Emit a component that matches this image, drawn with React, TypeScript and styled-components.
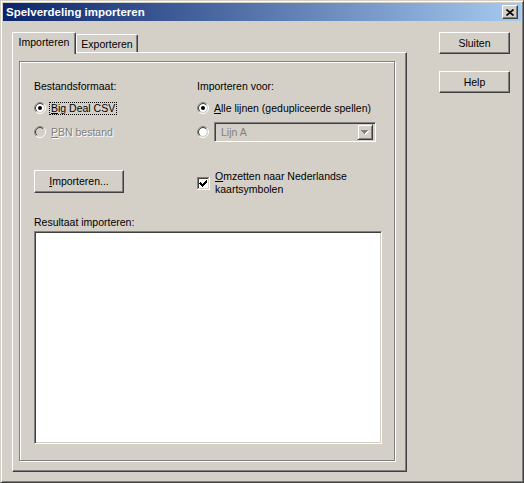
import styled, { createGlobalStyle } from 'styled-components'

const GlobalStyle = createGlobalStyle`
  html, body {
    margin: 0;
    padding: 0;
    background: #d4d0c8;
  }
  body {
    font-family: "Liberation Sans", Arial, sans-serif;
    font-size: 10.5px;
    color: #000;
  }
`

const Window = styled.div`
  width: 524px;
  height: 483px;
  box-sizing: border-box;
  background: #d4d0c8;
  border: 1px solid;
  border-color: #d4d0c8 #404040 #404040 #d4d0c8;
  box-shadow: inset 1px 1px #fff, inset -1px -1px #808080;
  padding: 2px;
  display: flex;
  flex-direction: column;
`

const TitleBar = styled.div`
  height: 18px;
  flex-shrink: 0;
  display: flex;
  align-items: center;
  justify-content: space-between;
  padding: 0 3px 0 3px;
  background: linear-gradient(to right, #0a246a, #a6caf0);
`

const TitleText = styled.span`
  color: #fff;
  font-weight: bold;
  font-size: 11.5px;
`

const CloseButton = styled.div`
  width: 16px;
  height: 14px;
  box-sizing: border-box;
  background: #d4d0c8;
  border: 1px solid;
  border-color: #fff #404040 #404040 #fff;
  box-shadow: inset -1px -1px #808080;
  display: flex;
  align-items: center;
  justify-content: center;
  padding-right: 1px;
`

const Body = styled.div`
  flex: 1;
  display: flex;
  padding: 11px 0 0 9px;
`

const TabArea = styled.div`
  width: 395px;
  display: flex;
  flex-direction: column;
`

const TabStrip = styled.div`
  height: 20px;
  display: flex;
  align-items: flex-end;
`

const Tab = styled.div<{ $active?: boolean }>`
  position: relative;
  z-index: ${p => (p.$active ? 1 : 0)};
  width: ${p => (p.$active ? 64 : 62)}px;
  height: ${p => (p.$active ? 22 : 18)}px;
  margin-bottom: ${p => (p.$active ? -2 : 0)}px;
  box-sizing: border-box;
  background: #d4d0c8;
  border-top: 1px solid #fff;
  border-left: 1px solid #fff;
  border-right: 1px solid #404040;
  border-radius: 2px 2px 0 0;
  box-shadow: inset -1px 0 #808080;
  padding-top: 3px;
  line-height: 13px;
  text-align: center;
`

const Panel = styled.div`
  width: 395px;
  height: 420px;
  box-sizing: border-box;
  border: 1px solid;
  border-color: #fff #404040 #404040 #fff;
  box-shadow: inset -1px -1px #808080;
  padding: 8px 11px 10px 6px;
  display: flex;
`

const Frame = styled.div`
  flex: 1;
  box-sizing: border-box;
  border: 1px solid #808080;
  box-shadow: 1px 1px #fff, inset 1px 1px #fff;
  padding: 18px 12px 0 14px;
  display: flex;
  flex-direction: column;
`

const Row = styled.div<{ $mt: number; $h: number }>`
  display: grid;
  grid-template-columns: 163px 1fr;
  align-items: center;
  height: ${p => p.$h}px;
  margin-top: ${p => p.$mt}px;
`

const Label = styled.div`
  line-height: 13px;
  white-space: nowrap;
`

const Option = styled.div<{ $disabled?: boolean }>`
  display: flex;
  align-items: center;
  gap: 3px;
  color: ${p => (p.$disabled ? '#808080' : '#000')};
  text-shadow: ${p => (p.$disabled ? '1px 1px #fff' : 'none')};
  white-space: nowrap;
`

const Caption = styled.span<{ $focus?: boolean }>`
  line-height: 11px;
  padding: 0 1px;
  border: 1px dotted ${p => (p.$focus ? '#000' : 'transparent')};
`

const Key = styled.span`
  text-decoration: underline;
`

const Combo = styled.div`
  width: 162px;
  height: 20px;
  margin-left: 2px;
  box-sizing: border-box;
  border: 1px solid;
  border-color: #808080 #fff #fff #808080;
  box-shadow: inset 1px 1px #404040, inset -1px -1px #d4d0c8;
  padding: 2px;
  display: flex;
  align-items: center;
  justify-content: space-between;
  background: #d4d0c8;
`

const ComboText = styled.span`
  color: #808080;
  padding-left: 4px;
  line-height: 13px;
`

const DropButton = styled.div`
  width: 16px;
  height: 16px;
  box-sizing: border-box;
  border: 1px solid;
  border-color: #d4d0c8 #404040 #404040 #d4d0c8;
  box-shadow: inset 1px 1px #fff, inset -1px -1px #808080;
  display: flex;
  align-items: center;
  justify-content: center;
`

const PushButton = styled.div<{ $w: number; $h: number }>`
  width: ${p => p.$w}px;
  height: ${p => p.$h}px;
  box-sizing: border-box;
  background: #d4d0c8;
  border: 1px solid;
  border-color: #fff #404040 #404040 #fff;
  box-shadow: inset -1px -1px #808080;
  display: flex;
  align-items: center;
  justify-content: center;
  line-height: 13px;
`

const CheckOption = styled.div`
  display: flex;
  align-items: center;
  gap: 3px;
`

const CheckText = styled.div`
  line-height: 13px;
  padding-left: 2px;
`

const ResultLabel = styled.div`
  margin-top: 20px;
  line-height: 13px;
`

const ResultBox = styled.div`
  margin-top: 2px;
  width: 348px;
  height: 213px;
  box-sizing: border-box;
  background: #fff;
  border: 1px solid;
  border-color: #808080 #fff #fff #808080;
  box-shadow: inset 1px 1px #404040, inset -1px -1px #d4d0c8;
`

const ButtonColumn = styled.div`
  margin-left: 32px;
  display: flex;
  flex-direction: column;
  gap: 17px;
`

function Radio({ checked, disabled }: { checked?: boolean; disabled?: boolean }) {
  return (
    <svg width="12" height="12" viewBox="0 0 12 12">
      <circle cx="6" cy="6" r="4" fill={disabled ? '#d4d0c8' : '#fff'} />
      <circle cx="6" cy="6" r="5.5" fill="none" stroke="#fff" />
      <path d="M2.1 9.9A5.5 5.5 0 0 1 9.9 2.1" fill="none" stroke="#808080" />
      <circle cx="6" cy="6" r="4.5" fill="none" stroke="#d4d0c8" />
      <path d="M2.8 9.2A4.5 4.5 0 0 1 9.2 2.8" fill="none" stroke="#404040" />
      {checked && <circle cx="6" cy="6" r="2" fill="#000" />}
    </svg>
  )
}

function Checkbox() {
  return (
    <svg width="13" height="13" viewBox="0 0 13 13" shapeRendering="crispEdges">
      <rect x="0" y="0" width="13" height="13" fill="#fff" />
      <rect x="0" y="0" width="12" height="1" fill="#808080" />
      <rect x="0" y="0" width="1" height="12" fill="#808080" />
      <rect x="1" y="1" width="10" height="1" fill="#404040" />
      <rect x="1" y="1" width="1" height="10" fill="#404040" />
      <rect x="1" y="11" width="11" height="1" fill="#d4d0c8" />
      <rect x="11" y="1" width="1" height="11" fill="#d4d0c8" />
      <path d="M3 5h1v1h1v1h1v-1h1v-1h1v-1h1v-1h1v3h-1v1h-1v1h-1v1h-1v1h-1v-1h-1v-1h-1v-1h-1z" fill="#000" />
    </svg>
  )
}

export default function App() {
  return (
    <>
      <GlobalStyle />
      <Window>
        <TitleBar>
          <TitleText>Spelverdeling importeren</TitleText>
          <CloseButton>
            <svg width="8" height="7" viewBox="0 0 8 7">
              <path d="M0.5 0.5L7.5 6.5M7.5 0.5L0.5 6.5" stroke="#000" strokeWidth="1.7" />
            </svg>
          </CloseButton>
        </TitleBar>
        <Body>
          <TabArea>
            <TabStrip>
              <Tab $active>Importeren</Tab>
              <Tab>Exporteren</Tab>
            </TabStrip>
            <Panel>
              <Frame>
                <Row $mt={0} $h={13}>
                  <Label>Bestandsformaat:</Label>
                  <Label>Importeren voor:</Label>
                </Row>
                <Row $mt={7} $h={16}>
                  <Option>
                    <Radio checked />
                    <Caption $focus>
                      <Key>B</Key>ig Deal CSV
                    </Caption>
                  </Option>
                  <Option>
                    <Radio checked />
                    <Caption>
                      <Key>A</Key>lle lijnen (gedupliceerde spellen)
                    </Caption>
                  </Option>
                </Row>
                <Row $mt={6} $h={20}>
                  <Option $disabled>
                    <Radio disabled />
                    <Caption>
                      <Key>P</Key>BN bestand
                    </Caption>
                  </Option>
                  <Option>
                    <Radio />
                    <Combo>
                      <ComboText>Lijn A</ComboText>
                      <DropButton>
                        <svg width="8" height="5" viewBox="0 0 8 5" shapeRendering="crispEdges">
                          <path d="M1 1h7l-3.5 4z" fill="#fff" />
                          <path d="M0 0h7l-3.5 4z" fill="#808080" />
                        </svg>
                      </DropButton>
                    </Combo>
                  </Option>
                </Row>
                <Row $mt={28} $h={26}>
                  <PushButton $w={90} $h={23} style={{ alignSelf: 'start' }}>
                    <span>
                      <Key>I</Key>mporteren...
                    </span>
                  </PushButton>
                  <CheckOption>
                    <Checkbox />
                    <CheckText>
                      <Key>O</Key>mzetten naar Nederlandse
                      <br />
                      kaartsymbolen
                    </CheckText>
                  </CheckOption>
                </Row>
                <ResultLabel>Resultaat importeren:</ResultLabel>
                <ResultBox />
              </Frame>
            </Panel>
          </TabArea>
          <ButtonColumn>
            <PushButton $w={71} $h={22}>Sluiten</PushButton>
            <PushButton $w={71} $h={22}>Help</PushButton>
          </ButtonColumn>
        </Body>
      </Window>
    </>
  )
}
